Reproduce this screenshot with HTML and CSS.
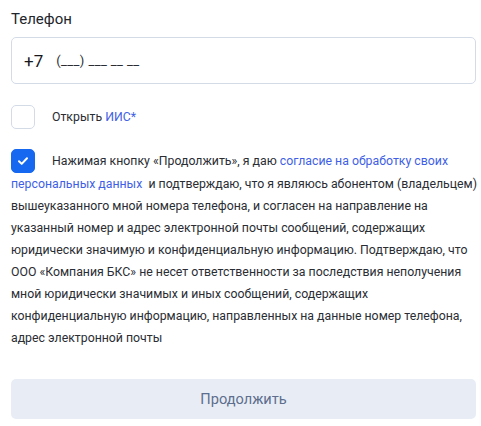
FILE: index.html
```html
<!DOCTYPE html>
<html lang="ru">
<head>
<meta charset="utf-8">
<link rel="stylesheet" href="styles.css">
</head>
<body>
<div class="form">
  <label class="label">Телефон</label>
  <div class="input"><span class="code">+7</span><span class="mask">(___) ___ __ __</span></div>
  <div class="row iis">
    <span class="box"></span>
    <span class="iis-text">Открыть <a class="link">ИИС*</a></span>
  </div>
  <p class="text"><span class="box checked"><svg width="14" height="14" viewBox="0 0 14 14"><path d="M3 7.3l2.7 2.6L11 4.3" fill="none" stroke="#fff" stroke-width="2" stroke-linecap="round" stroke-linejoin="round"/></svg></span>Нажимая кнопку «Продолжить», я даю <a class="link">согласие на обработку своих персональных данных</a>&nbsp; и подтверждаю, что я являюсь абонентом (владельцем) вышеуказанного мной номера телефона, и согласен на направление на указанный номер и адрес электронной почты сообщений, содержащих юридически значимую и конфиденциальную информацию. Подтверждаю, что ООО «Компания БКС» не несет ответственности за последствия неполучения мной юридически значимых и иных сообщений, содержащих конфиденциальную информацию, направленных на данные номер телефона, адрес электронной почты</p>
  <button class="btn">Продолжить</button>
</div>
</body>
</html>
```
FILE: styles.css
```css
* { box-sizing: border-box; }
body { margin: 0; background: #fff; font-family: Roboto, "Noto Sans", sans-serif; color: #1f2229; }
.form { padding: 10px 5px 0 11px; display: flex; flex-direction: column; }
.label { font-size: 15px; line-height: 18px; color: #22252b; }
.input { margin-top: 9px; height: 47px; border: 1px solid #d3dbe7; border-radius: 5px; display: flex; align-items: center; padding-left: 12px; font-size: 17px; color: #16181d; }
.code { margin-right: 13px; }
.mask { font-size: 13px; letter-spacing: 0.4px; color: #2a2d33; }
.row { display: flex; align-items: center; }
.iis { margin-top: 21px; height: 24px; }
.box { flex: none; width: 24px; height: 24px; border: 1px solid #d3dbe7; border-radius: 5px; display: inline-flex; align-items: center; justify-content: center; }
.box.checked { background: #1668f0; border-color: #1668f0; vertical-align: -3px; margin-right: 17px; }
.iis-text { margin-left: 17px; font-size: 12.3px; color: #2a2d33; }
.link { color: #3f5fe6; text-decoration: none; }
.text { margin: 20px -5px 0 0; font-size: 12.3px; line-height: 22px; color: #2a2d33; }
.btn { margin-top: 30px; height: 40px; border: none; border-radius: 5px; background: #e8edf5; color: #5d6e8e; font-family: inherit; font-size: 14.6px; }
```
